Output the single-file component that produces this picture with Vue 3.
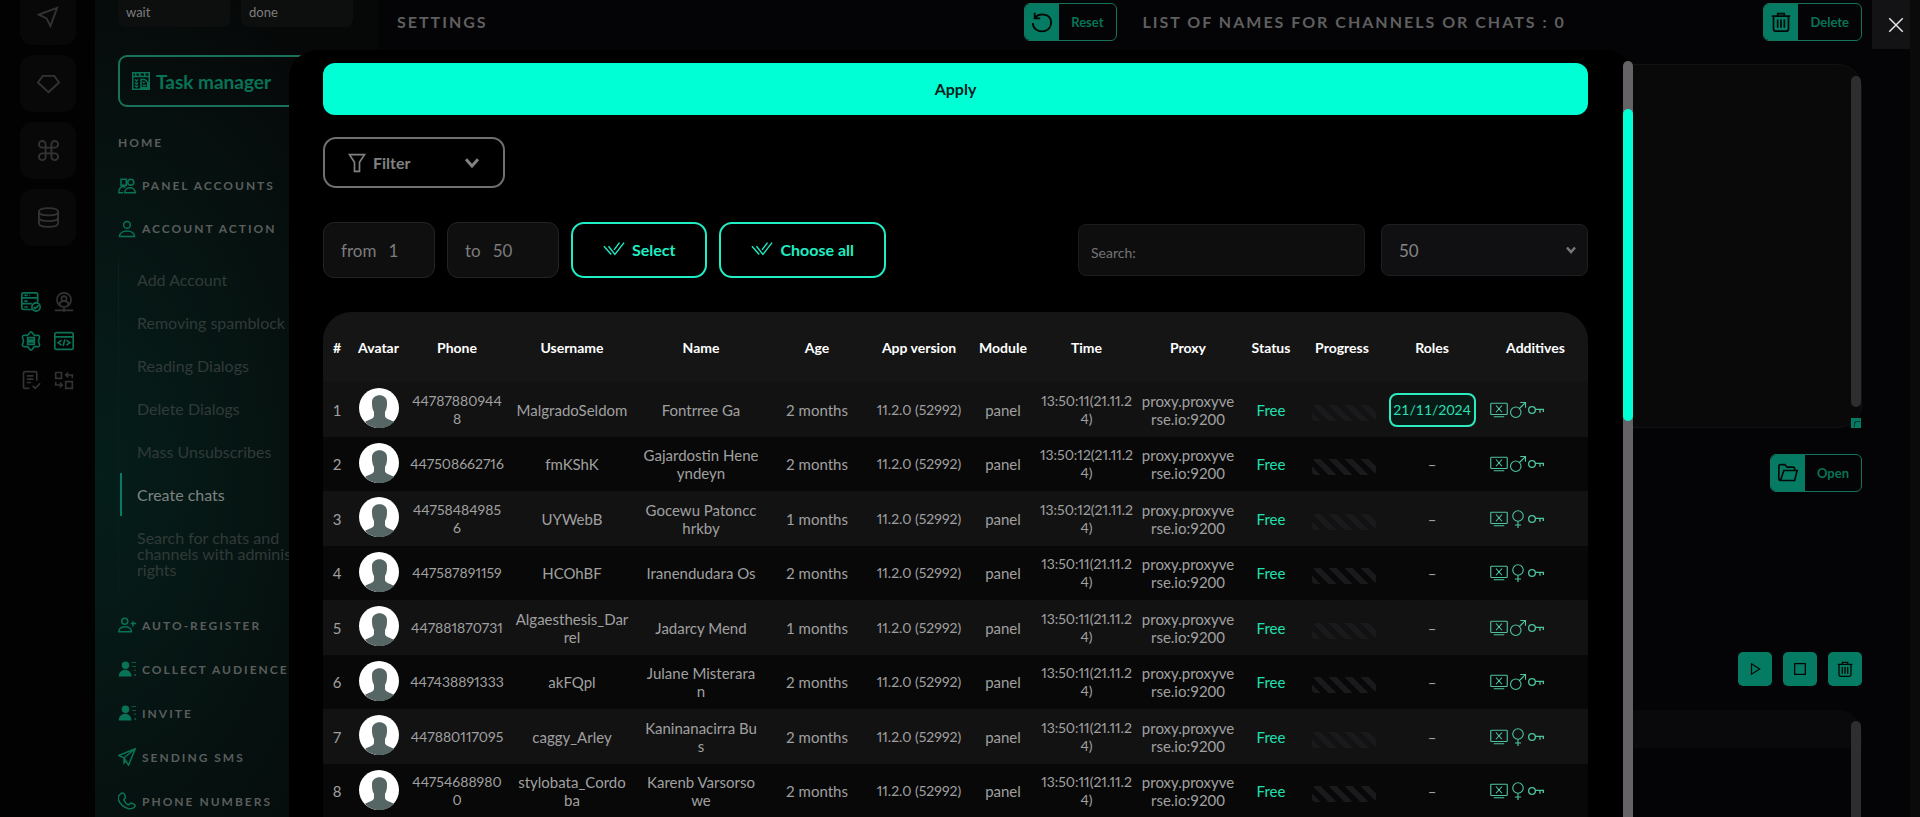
<script setup>
import { h } from 'vue'

const shapes = {
  send: ['M21 3 2 10l8 4 4 8Z'],
  gem: ['M6 4h12l5 7-11 10L1 11Z'],
  command: ['M9 9h6v6H9ZM9 9H5.500a3.500 3.500 0 1 1 3.500-3.500ZM15 9V5.500a3.500 3.500 0 1 1 3.500 3.500ZM15 15h3.500a3.500 3.500 0 1 1-3.500 3.500ZM9 15v3.500a3.500 3.500 0 1 1-3.500-3.500Z'],
  database: ['M2 6c0-5 20-5 20 0s-20 5-20 0ZM2 6v12c0 5 20 5 20 0V6M2 12c0 5 20 5 20 0'],
  servers: ['M3 1h15a2 2 0 0 1 2 2v4H1V3a2 2 0 0 1 2-2ZM1 7h19v5M1 7v7h12M1 14v5a2 2 0 0 0 2 2h10M4 4h4M4 11h4M4 18h4M10 4h1', 'M18 13a5 5 0 1 0 0 10 5 5 0 0 0 0-10M15 18l2 2 4-4'],
  persona: ['M12 1a8.500 8.500 0 1 0 0 17 8.500 8.500 0 0 0 0-17M12 5a3 3 0 1 0 0 6 3 3 0 0 0 0-6M7 15v-1c0-4 10-4 10 0v1M12 18v3M1 22h9M14 22h9M12 21a1 1 0 1 0 0 2 1 1 0 0 0 0-2'],
  gear: ['M12 1c2 0 2 3 4 4s5-1 6 1-1 4-1 6 2 4 1 6-4 0-6 1-2 4-4 4-2-3-4-4-5 1-6-1 1-4 1-6-2-4-1-6 4 0 6-1 2-4 4-4Z', 'M8 8h8v3H8ZM8 13h8v3H8Z'],
  code: ['M3 2h18a2 2 0 0 1 2 2v16a2 2 0 0 1-2 2H3a2 2 0 0 1-2-2V4a2 2 0 0 1 2-2ZM1 7h22M9 11l-4 3 4 3M15 11l4 3-4 3M13 10l-2 8'],
  note: ['M10 22H5a2 2 0 0 1-2-2V4a2 2 0 0 1 2-2h12a2 2 0 0 1 2 2v9M7 7h8M7 11h8M7 15h5M14 19l3 3 6-6'],
  swap: ['M2 3h7v7H2ZM14 14h8v8h-8ZM22 10V6h-8M17 3l-3 3 3 3M2 14v4h8M7 15l3 3-3 3'],
  board: ['M1 1h22v22H1ZM1 6h22M5 1v5M9 1l3 5M17 1v5M12 10h5l4 4v7h-9ZM14 14h3M14 18h5M4 10l2 2 2-2M4 14l2 2 2-2M4 18l2 2 2-2'],
  users: ['M4 3h7v8H4ZM10 14c-5-3-9 0-9 7h6M17 3a4 4 0 1 0 0 8 4 4 0 0 0 0-8M9 21c0-9 14-9 14 0Z'],
  user: ['M12 2a4.500 4.500 0 1 0 0 9 4.500 4.500 0 0 0 0-9M2 22c0-10 20-10 20 0Z'],
  userAdd: ['M9 3a4 4 0 1 0 0 8 4 4 0 0 0 0-8M1 21c0-9 17-9 17 0ZM17 10h7M20 7v7'],
  plane: ['M23 1 1 10l7 3 6 10ZM23 1 8 13v7l3-3'],
  phone: ['M3 3c4-4 6 0 7 4 0 2-3 2-2 4 1 3 3 5 6 6 2 0 2-3 4-2 4 1 6 3 4 5-8 9-29-9-19-17Z'],
  filter: ['M3 2h18l-6 9v11H9V11Z'],
  chevron: ['m4 7 8 9 8-9'],
  checks: ['m1 9 8 9M6 9l7 9L23 5M12 13l6-8'],
  reset: ['M4 2v6h6M4 8C8 2 21 2 22 12c0 14-20 13-20 1'],
  trash: ['M1 5h22M8 5V2h8v3M3 5v15a3 3 0 0 0 3 3h12a3 3 0 0 0 3-3V5M8 9v10M12 9v10M16 9v10'],
  folder: ['M3 21a2 2 0 0 1-2-2V4a2 2 0 0 1 2-2h5l3 3h7a2 2 0 0 1 2 2v2M3 21l4-12h16l-3 12Z'],
  play: ['M6 3v18l14-9Z'],
  stop: ['M4 4h16v16H4Z'],
  close: ['m3 3 18 18M21 3 3 21'],
  device: ['M2 3h20a1 1 0 0 1 1 1v13a1 1 0 0 1-1 1H2a1 1 0 0 1-1-1V4a1 1 0 0 1 1-1ZM5 21h14M8 6l8 9M16 6l-8 9'],
  male: ['M9 8a7 7 0 1 0 0 14A7 7 0 0 0 9 8M14 10l8-8M15 2h7v7'],
  female: ['M12 1a7 7 0 1 0 0 14 7 7 0 0 0 0-14M12 15v9M8 20h8'],
  key: ['M6 7a5 5 0 1 0 0 10A5 5 0 0 0 6 7M11 11h12v4M18 11v5']
}

const Icon = (props) =>
  h('svg', { viewBox: '0 0 24 24', width: props.size, height: props.size, class: 'icon', 'stroke-width': props.weight || 2, 'aria-hidden': 'true' },
    shapes[props.name].map((d) => h('path', { d })))
Icon.props = ['name', 'size', 'weight']

const rail = [
  { icon: 'send', label: 'Messages' },
  { icon: 'gem', label: 'Premium' },
  { icon: 'command', label: 'Commands' },
  { icon: 'database', label: 'Database' }
]
const tools = [
  { icon: 'servers', label: 'Servers', on: true },
  { icon: 'persona', label: 'Persona', on: false },
  { icon: 'gear', label: 'Server settings', on: true },
  { icon: 'code', label: 'Code', on: true },
  { icon: 'note', label: 'Notes', on: false },
  { icon: 'swap', label: 'Swap', on: false }
]
const links = [
  { text: 'Add Account' },
  { text: 'Removing spamblock' },
  { text: 'Reading Dialogs' },
  { text: 'Delete Dialogs' },
  { text: 'Mass Unsubscribes' },
  { text: 'Create chats', active: true },
  { text: 'Search for chats and\nchannels with administrator\nrights' }
]
const lower = [
  { icon: 'userAdd', text: 'Auto-register' },
  { icon: 'list', text: 'Collect audience' },
  { icon: 'list', text: 'Invite' },
  { icon: 'plane', text: 'Sending SMS' },
  { icon: 'phone', text: 'Phone numbers' }
]
const heads = ['#', 'Avatar', 'Phone', 'Username', 'Name', 'Age', 'App version', 'Module', 'Time', 'Proxy', 'Status', 'Progress', 'Roles', 'Additives']
const accounts = [
  { phone: '44787880944\n8', user: 'MalgradoSeldom', name: 'Fontrree Ga', age: 2, time: '13:50:11(21.11.2\n4)', role: '21/11/2024', sex: 'male' },
  { phone: '447508662716', user: 'fmKShK', name: 'Gajardostin Hene\nyndeyn', age: 2, time: '13:50:12(21.11.2\n4)', sex: 'male' },
  { phone: '44758484985\n6', user: 'UYWebB', name: 'Gocewu Patoncc\nhrkby', age: 1, time: '13:50:12(21.11.2\n4)', sex: 'female' },
  { phone: '447587891159', user: 'HCOhBF', name: 'Iranendudara Os', age: 2, time: '13:50:11(21.11.2\n4)', sex: 'female' },
  { phone: '447881870731', user: 'Algaesthesis_Dar\nrel', name: 'Jadarcy Mend', age: 1, time: '13:50:11(21.11.2\n4)', sex: 'male' },
  { phone: '447438891333', user: 'akFQpl', name: 'Julane Misterara\nn', age: 2, time: '13:50:11(21.11.2\n4)', sex: 'male' },
  { phone: '447880117095', user: 'caggy_Arley', name: 'Kaninanacirra Bu\ns', age: 2, time: '13:50:11(21.11.2\n4)', sex: 'female' },
  { phone: '44754688980\n0', user: 'stylobata_Cordo\nba', name: 'Karenb Varsorso\nwe', age: 2, time: '13:50:11(21.11.2\n4)', sex: 'female' }
]
</script>

<template>
  <div class="shell">
    <nav class="rail" aria-label="Sections">
      <div class="rail-main">
        <button v-for="r in rail" :key="r.icon" type="button" :aria-label="r.label"><Icon :name="r.icon" size="23" /></button>
      </div>
      <div class="rail-tools">
        <button v-for="t in tools" :key="t.icon" type="button" :class="{ on: t.on }" :aria-label="t.label"><Icon :name="t.icon" size="20" /></button>
      </div>
    </nav>

    <aside class="side">
      <div class="tallies"><div>wait</div><div>done</div></div>
      <button class="tasks" type="button"><Icon name="board" size="18" />Task manager</button>
      <a class="group" href="#">Home</a>
      <a class="group" href="#"><Icon name="users" size="18" />Panel accounts</a>
      <a class="group" href="#"><Icon name="user" size="18" />Account action</a>
      <div class="links">
        <a v-for="l in links" :key="l.text" href="#" :class="{ active: l.active }">{{ l.text }}</a>
      </div>
      <a v-for="g in lower" :key="g.text" class="group lower" href="#">
        <svg v-if="g.icon === 'list'" class="solid" viewBox="0 0 24 24" width="18" height="18" aria-hidden="true">
          <circle cx="10" cy="7" r="5" /><path d="M1 22c0-12 17-12 17 0ZM18 3h6v1h-6ZM19 8h5v1h-5ZM21 13h3v1h-3ZM22 19h2v2h-2Z" />
        </svg>
        <Icon v-else :name="g.icon" size="18" />{{ g.text }}
      </a>
    </aside>

    <main class="main">
      <section class="col">
        <header class="bar">
          <h2>Settings</h2>
          <button class="split" type="button"><span class="lead"><Icon name="reset" size="22" /></span><span class="cap">Reset</span></button>
        </header>
      </section>
      <section class="col">
        <header class="bar">
          <h2>List of names for channels or chats : 0</h2>
          <button class="split" type="button"><span class="lead"><Icon name="trash" size="20" /></span><span class="cap">Delete</span></button>
        </header>
        <div class="names">
          <textarea aria-label="List of names"></textarea>
          <span class="track"></span>
          <span class="grip"></span>
        </div>
        <div class="end"><button class="split" type="button"><span class="lead"><Icon name="folder" size="20" /></span><span class="cap">Open</span></button></div>
        <div class="end actions">
          <button type="button" aria-label="Start"><Icon name="play" size="14" /></button>
          <button type="button" aria-label="Stop"><Icon name="stop" size="16" /></button>
          <button type="button" aria-label="Remove"><Icon name="trash" size="16" /></button>
        </div>
        <div class="log"><div class="log-head"></div><span class="track"></span></div>
      </section>
    </main>

    <button class="close" type="button" aria-label="Close"><Icon name="close" size="18" /></button>
    <span class="page-track"></span>

    <div class="modal" role="dialog" aria-label="Accounts">
      <button class="apply" type="button">Apply</button>
      <button class="filter" type="button"><Icon name="filter" size="20" /><span>Filter</span><Icon name="chevron" size="18" weight="4" /></button>
      <div class="tools">
        <label class="range">from<input type="text" value="1"></label>
        <label class="range">to<input type="text" value="50"></label>
        <button class="pick" type="button"><Icon name="checks" size="22" weight="1.5" />Select</button>
        <button class="pick" type="button"><Icon name="checks" size="22" weight="1.5" />Choose all</button>
        <input class="search" type="text" placeholder="Search:" aria-label="Search">
        <div class="count">
          <select aria-label="Rows per page"><option>50</option></select>
          <Icon name="chevron" size="12" weight="5" />
        </div>
      </div>
      <table>
        <thead><tr><th v-for="t in heads" :key="t" scope="col">{{ t }}</th></tr></thead>
        <tbody>
          <tr v-for="(a, i) in accounts" :key="i">
            <td>{{ i + 1 }}</td>
            <td class="avatar">
              <svg viewBox="0 0 40 40" width="40" height="40" role="img" aria-label="Avatar">
                <circle cx="20" cy="20" r="20" fill="#fff" />
                <path d="M6 34c2-2 9-3 9-6v-4c-2-3-2-7-2-10 0-9 15-9 15 0 0 3 0 7-2 10v4c0 3 7 4 9 6a20 20 0 0 1-29 0Z" fill="#556664" />
              </svg>
            </td>
            <td class="num">{{ a.phone }}</td>
            <td>{{ a.user }}</td>
            <td>{{ a.name }}</td>
            <td>{{ a.age }} months</td>
            <td class="num">11.2.0 (52992)</td>
            <td>panel</td>
            <td class="num">{{ a.time }}</td>
            <td>{{ 'proxy.proxyve\nrse.io:9200' }}</td>
            <td class="free">Free</td>
            <td><div class="progress"></div></td>
            <td><span v-if="a.role" class="role">{{ a.role }}</span><template v-else>–</template></td>
            <td><div class="extras"><Icon name="device" size="18" weight="1.5" /><Icon :name="a.sex" size="18" weight="1.5" /><Icon name="key" size="16" /></div></td>
          </tr>
        </tbody>
      </table>
      <span class="modal-track"><span class="thumb"></span></span>
    </div>
  </div>
</template>

<style>
body { background: #040406; }
</style>

<style scoped>
* { box-sizing: border-box; }
.shell {
  position: relative;
  display: flex;
  height: 100vh;
  overflow: hidden;
  background: #020203;
  color: #a0a0a0;
  font-family: Lato, "Open Sans", sans-serif;
  font-size: 15px;
}
button, input, select, textarea { font: inherit; color: inherit; margin: 0; padding: 0; border: 0; background: none; outline: 0; }
a { color: inherit; text-decoration: none; }
.icon { flex: none; fill: none; stroke: currentColor; }

.rail { flex: 0 0 95px; padding-left: 20px; background: #020203; color: #333; }
.rail-main { display: grid; gap: 10px; width: 56px; margin-top: -12px; }
.rail-main button { display: flex; align-items: center; justify-content: center; height: 57px; border-radius: 13px; background: #080808; }
.rail-tools { display: grid; grid-template-columns: 22px 22px; gap: 17px 11px; margin-top: 45px; }
.rail-tools button { display: flex; align-items: center; justify-content: center; height: 22px; }
.rail-tools .on { color: #087357; }

.side {
  flex: 0 0 283px;
  padding: 0 25px 0 23px;
  background: radial-gradient(ellipse at 0 58%, #051e1a 0, #061311 45%, transparent 80%), linear-gradient(#060808, #050a0b);
}
.tallies { display: grid; grid-template-columns: 1fr 1fr; gap: 11px; }
.tallies div { height: 27px; padding: 4px 8px; border-radius: 0 0 8px 8px; background: #0d0f0f; color: #7d7d7d; font-size: 13px; }
.tasks {
  display: flex; align-items: center; gap: 6px; width: 100%; height: 52px; margin: 28px 0 14px; padding-left: 12px;
  border: 2px solid #1a715b; border-radius: 9px; color: #087357; font-size: 19px; font-weight: 700;
}
.group {
  display: flex; align-items: center; gap: 6px; height: 43px;
  color: #5a5d5d; font-size: 12px; font-weight: 700; letter-spacing: 2px; text-transform: uppercase; white-space: nowrap;
}
.group.lower { height: 44px; }
.group .icon { color: #087357; }
.solid { flex: none; fill: #087357; }
.links { display: grid; gap: 27px; margin: 8px 0 10px; padding: 14px 0 15px 18px; border-left: 1px solid #06201b; }
.links a { position: relative; color: #313a39; font-size: 16px; line-height: 16px; white-space: pre; overflow: visible; }
.links .active { color: #7d8382; }
.links .active::before { content: ""; position: absolute; left: -17px; top: -14px; width: 2px; height: 43px; background: #0a7a62; }

.main {
  flex: 1; display: grid; grid-template-columns: 1fr 1fr; gap: 26px; min-width: 0; padding: 3px 58px 0 19px;
  background: #040406;
}
.col { display: flex; flex-direction: column; min-width: 0; }
.bar { display: flex; align-items: center; justify-content: space-between; height: 38px; }
.bar h2 { margin: 0; padding-bottom: 2px; color: #5f5f5f; font-size: 16px; font-weight: 700; letter-spacing: 2px; text-transform: uppercase; }
.split { display: flex; height: 38px; border: 1px solid #14735c; border-radius: 6px; overflow: hidden; color: #087357; font-size: 13px; font-weight: 700; }
.lead { display: flex; align-items: center; justify-content: center; width: 34px; height: 100%; background: #047b62; color: #020806; }
.cap { display: flex; align-items: center; height: 100%; padding: 0 12px; }
.names { position: relative; height: 364px; margin: 23px 0 26px; }
.names textarea { display: block; width: 100%; height: 100%; border: 1px solid #101211; border-radius: 24px; background: #09090a; resize: none; }
.track { position: absolute; right: 1px; top: 12px; bottom: 21px; width: 10px; border-radius: 5px; background: #2e2e2f; }
.grip { position: absolute; right: 1px; bottom: 0; width: 10px; height: 10px; background: #047b62; }
.grip::after { content: ""; position: absolute; right: 1px; bottom: 1px; width: 5px; height: 5px; border-left: 1px solid #02332a; border-top: 1px solid #02332a; border-radius: 3px 0 0 0; }
.end { display: flex; justify-content: flex-end; }
.actions { gap: 11px; margin: 160px 0 24px; }
.actions button { display: flex; align-items: center; justify-content: center; width: 34px; height: 34px; border-radius: 5px; background: #047b62; color: #020806; }
.log { position: relative; flex: 1; }
.log-head { height: 38px; border-radius: 0 24px 0 0; background: #09090b; }
.log .track { top: 11px; bottom: 0; border-radius: 5px 5px 0 0; }

.close { position: absolute; right: 0; top: 0; display: flex; align-items: center; justify-content: center; width: 48px; height: 49px; background: #131316; color: #e2e2e2; }
.page-track { position: absolute; right: 0; top: 0; bottom: 0; width: 10px; background: #0a0a0b; }

.modal { position: absolute; left: calc(15% + 1px); right: calc(15% - 1px); top: 50px; bottom: 0; padding: 13px 45px 0 34px; border-radius: 28px 28px 0 0; background: #000; }
.apply { display: block; width: 100%; height: 52px; padding-bottom: 2px; border-radius: 12px; background: #00ffd5; color: #06201a; font-size: 16px; font-weight: 700; }
.filter { display: flex; align-items: center; gap: 6px; width: 182px; height: 51px; margin: 22px 0 34px; padding: 0 22px; border: 2px solid #707070; border-radius: 13px; color: #808080; font-size: 16px; font-weight: 700; }
.filter span { flex: 1; text-align: left; }
.tools { display: flex; align-items: center; gap: 12px; margin-bottom: 34px; }
.range { display: flex; align-items: center; gap: 12px; width: 112px; height: 56px; padding: 0 17px; border: 1px solid #232324; border-radius: 11px; background: #0f0f10; color: #7c7c7c; font-size: 17px; }
.range input { flex: 1; width: 0; min-width: 0; }
.pick { display: flex; align-items: center; gap: 7px; height: 56px; padding: 0 30px 2px; border: 2px solid #1fedc3; border-radius: 13px; color: #1fedc3; font-size: 16px; font-weight: 700; }
.search { width: 287px; height: 52px; margin-left: auto; padding: 4px 12px 0; border: 1px solid #1c1c1d; border-radius: 8px; background: #0e0e0f; font-size: 14px; }
.search::placeholder { color: #747474; opacity: 1; }
.count { position: relative; width: 207px; height: 52px; margin-left: 4px; }
.count select { width: 100%; height: 100%; padding: 0 17px; border: 1px solid #1f1f21; border-radius: 8px; background: #101012; color: #858585; font-size: 17px; appearance: none; }
.count .icon { position: absolute; right: 11px; top: 20px; color: #777; pointer-events: none; }

table { width: 100%; table-layout: fixed; border-collapse: separate; border-spacing: 0; border-radius: 28px 28px 0 0; overflow: hidden; background: #151516; text-align: center; }
th { height: 70px; padding: 0; color: #fff; font-size: 14px; font-weight: 700; white-space: nowrap; }
th:nth-child(1) { width: 28px; }
th:nth-child(2) { width: 55px; }
th:nth-child(3), th:nth-child(6), th:nth-child(7), th:nth-child(10), th:nth-child(13) { width: 102px; }
th:nth-child(4) { width: 128px; }
th:nth-child(5) { width: 130px; }
th:nth-child(8) { width: 66px; }
th:nth-child(9) { width: 101px; }
th:nth-child(11) { width: 64px; }
th:nth-child(12) { width: 78px; }
th:nth-child(14) { width: 105px; }
td { height: 54px; padding: 0; background: #080808; line-height: 18px; white-space: pre; }
tr:nth-child(odd) td { height: 55px; background: #121213; }
.num { font-size: 14px; font-variant-numeric: proportional-nums; }
td.avatar { padding-top: 6px; vertical-align: top; }
.avatar svg { display: block; margin: 0 auto; }
.free { color: #1fe0ae; }
.progress { width: 64px; height: 16px; margin: 6px 5px 0 auto; border-radius: 4px; background: linear-gradient(45deg, #1a1a1c 25%, transparent 25%, transparent 50%, #1a1a1c 50%, #1a1a1c 75%, transparent 75%) 0 0 / 16px 16px; }
.role { display: flex; align-items: center; justify-content: center; width: 87px; height: 34px; margin: 0 auto; border: 2px solid #2cebbf; border-radius: 8px; background: #081a16; color: #2cdfb1; font-size: 14px; }
.extras { display: flex; align-items: center; gap: 1px; padding-left: 7px; color: #4dc3a0; }
.modal-track { position: absolute; right: 0; top: 11px; bottom: 0; width: 10px; border-radius: 5px 5px 0 0; background: #656366; }
.thumb { position: absolute; left: 0; top: 48px; width: 100%; height: 312px; border-radius: 5px; background: #00ffd5; }
</style>
